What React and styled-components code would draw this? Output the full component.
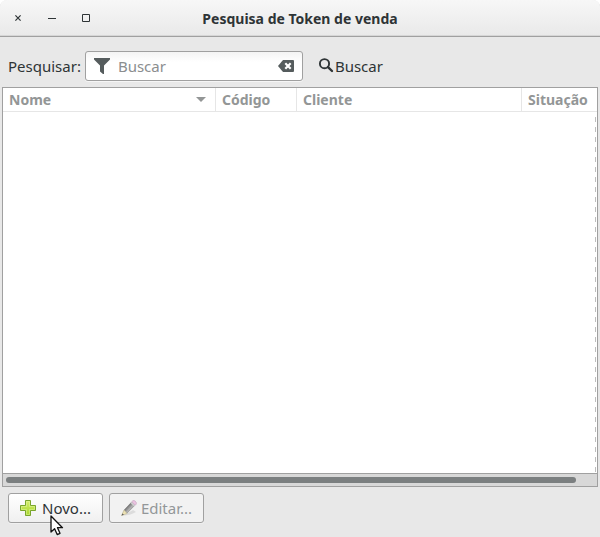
import React from 'react'
import styled, { createGlobalStyle } from 'styled-components'

const columns = [
  { label: 'Nome', width: '213px', sorted: true },
  { label: 'Código', width: '81px' },
  { label: 'Cliente' },
  { label: 'Situação', width: '75px' },
]

const CloseIcon = () => (
  <svg width="10" height="10" viewBox="0 0 10 10">
    <path d="M2.4 2.4 L7.6 7.6 M7.6 2.4 L2.4 7.6" stroke="#2e3436" strokeWidth="1.2" />
  </svg>
)

const MinimizeIcon = () => (
  <svg width="10" height="10" viewBox="0 0 10 10">
    <path d="M1 5.5 H9" stroke="#2e3436" />
  </svg>
)

const MaximizeIcon = () => (
  <svg width="10" height="10" viewBox="0 0 10 10">
    <path d="M1.5 1.5 H8.5 V8.5 H1.5 Z" stroke="#2e3436" fill="none" />
  </svg>
)

const FunnelIcon = () => (
  <svg width="16" height="16" viewBox="0 0 16 16">
    <path d="M0 0 H16 V1.5 L10 7.5 V16 H9 L6 13.5 V7.5 L0 1.5 Z" fill="#555c5d" />
  </svg>
)

const ClearIcon = () => (
  <svg width="16" height="12" viewBox="0 0 16 12">
    <path d="M5 0 H15 Q16 0 16 1 V11 Q16 12 15 12 H5 L0 6 Z" fill="#555c5d" />
    <path d="M7.3 3.3 L12.7 8.7 M12.7 3.3 L7.3 8.7" stroke="#fff" strokeWidth="2.2" />
  </svg>
)

const SearchIcon = () => (
  <svg width="16" height="16" viewBox="0 0 16 16">
    <circle cx="6.5" cy="5.7" r="4.6" fill="none" stroke="#2e3436" strokeWidth="1.9" />
    <path d="M10 9.2 L14 13" stroke="#2e3436" strokeWidth="2.4" strokeLinecap="round" />
  </svg>
)

const AddIcon = () => (
  <svg width="16" height="16" viewBox="0 0 16 16">
    <defs>
      <linearGradient id="add" x1="0" y1="0" x2="0" y2="1">
        <stop offset="0" stopColor="#d3ee6c" />
        <stop offset="1" stopColor="#a8d62c" />
      </linearGradient>
    </defs>
    <path
      d="M5.5 0.5 H10.5 V5.5 H15.5 V10.5 H10.5 V15.5 H5.5 V10.5 H0.5 V5.5 H5.5 Z"
      fill="url(#add)"
      stroke="#79a52d"
      strokeLinejoin="round"
    />
    <path
      d="M6.5 1.5 H9.5 V6.5 H14.5 V9.5 H9.5 V14.5 H6.5 V9.5 H1.5 V6.5 H6.5 Z"
      fill="none"
      stroke="#e6f6a5"
      strokeOpacity="0.5"
    />
  </svg>
)

const PencilIcon = () => (
  <svg width="16" height="16" viewBox="0 0 16 16">
    <path d="M2 15.5 Q9 15.5 15 12 L12 10 L5 14 Z" fill="#dcdcdc" />
    <path d="M3 10 L10.5 2 L14 5.5 L6 13.5 Z" fill="#9a9a9a" />
    <path d="M3 10 L10.5 2 L11.5 3 L4 11 Z" fill="#7f7f7f" />
    <path d="M5 12 L12 4.5 L13 5.3 L5.6 13 Z" fill="#b5b5b5" />
    <path d="M3 10 L6 13.5 L0.6 15.6 Z" fill="#eee3b4" stroke="#b9b08d" strokeWidth="0.6" />
    <path d="M1.6 13.4 L2.9 14.7 L0.5 15.6 Z" fill="#555" />
    <path d="M9.5 3 L10.8 1.7 L14.3 5.2 L13 6.5 Z" fill="#cfcfcf" />
    <path
      d="M10.8 1.7 L11.9 0.7 Q13 0 14.4 1.3 Q16 2.9 15.2 4.1 L14.3 5.2 Z"
      fill="#ecc5e2"
      stroke="#c59dbd"
      strokeWidth="0.6"
    />
  </svg>
)

const PointerIcon = () => (
  <svg width="14" height="21" viewBox="0 0 14 21">
    <path
      d="M1 1 V17 L4.6 13.7 L7.2 19.6 L10 18.3 L7.5 12.7 H12.5 Z"
      fill="#fff"
      stroke="#111"
      strokeWidth="1.3"
      strokeLinejoin="round"
    />
  </svg>
)

const App = () => (
  <Window>
    <GlobalStyle />
    <TitleBar>
      <WindowButton aria-label="Fechar">
        <CloseIcon />
      </WindowButton>
      <WindowButton aria-label="Minimizar">
        <MinimizeIcon />
      </WindowButton>
      <WindowButton aria-label="Maximizar">
        <MaximizeIcon />
      </WindowButton>
      <Title>Pesquisa de Token de venda</Title>
    </TitleBar>
    <SearchBar>
      <label htmlFor="search">Pesquisar:</label>
      <SearchBox>
        <FunnelIcon />
        <SearchInput id="search" placeholder="Buscar" />
        <IconButton aria-label="Limpar">
          <ClearIcon />
        </IconButton>
      </SearchBox>
      <FlatButton>
        <SearchIcon />
        Buscar
      </FlatButton>
    </SearchBar>
    <ListFrame>
      <ListArea>
        <Table>
          <thead>
            <tr>
              {columns.map(({ label, width, sorted }) => (
                <HeaderCell key={label} $width={width}>
                  <HeaderContent>
                    {label}
                    {sorted && <SortArrow />}
                  </HeaderContent>
                </HeaderCell>
              ))}
            </tr>
          </thead>
        </Table>
        <Overflow />
      </ListArea>
      <ScrollTrack>
        <ScrollThumb />
      </ScrollTrack>
    </ListFrame>
    <Actions>
      <ActionButton>
        <AddIcon />
        Novo...
        <Pointer>
          <PointerIcon />
        </Pointer>
      </ActionButton>
      <ActionButton disabled>
        <PencilIcon />
        Editar...
      </ActionButton>
    </Actions>
  </Window>
)

const GlobalStyle = createGlobalStyle`
  * {
    box-sizing: border-box;
  }

  body {
    margin: 0;
    background: #fff;
  }

  body, button, input {
    font-family: 'Noto Sans', 'Open Sans', sans-serif;
    font-size: 15px;
    line-height: 20px;
    color: #2e3436;
  }

  button {
    margin: 0;
    padding: 0;
    border: 0;
    background: none;
  }

  svg {
    display: block;
    flex: none;
  }
`

const Window = styled.main`
  display: flex;
  flex-direction: column;
  min-height: 100vh;
  border-radius: 7px 7px 0 0;
  background: #e8e8e8;
`

const TitleBar = styled.header`
  display: flex;
  align-items: center;
  gap: 24px;
  height: 37px;
  padding: 0 115px 0 13px;
  border-bottom: 1px solid #a0a0a0;
  border-radius: 7px 7px 0 0;
  background: linear-gradient(#f7f7f7, #e9e9e9);
  box-shadow: inset 0 -1px #d6d6d6;
`

const WindowButton = styled.button`
  flex: none;
`

const Title = styled.h1`
  flex: 1;
  margin: 0;
  padding-top: 2px;
  font-size: 14px;
  line-height: 20px;
  text-align: center;
`

const SearchBar = styled.div`
  display: flex;
  align-items: center;
  padding: 14px 8px 6px;
`

const SearchBox = styled.div`
  display: flex;
  align-items: center;
  width: 218px;
  height: 30px;
  margin-left: 4px;
  padding: 0 8px;
  border: 1px solid #a0a0a0;
  border-radius: 3px;
  background: linear-gradient(#f4f4f4, #fff 10px);
  box-shadow: 0 1px #f5f5f5;
`

const SearchInput = styled.input`
  flex: 1;
  min-width: 0;
  padding: 0 8px;
  border: 0;
  outline: 0;
  background: none;

  &::placeholder {
    color: #8b8e8f;
    opacity: 1;
  }
`

const IconButton = styled.button`
  flex: none;
`

const FlatButton = styled.button`
  display: flex;
  align-items: center;
  gap: 1px;
  margin-left: 15px;
`

const ListFrame = styled.section`
  display: flex;
  flex: 1;
  flex-direction: column;
  margin: 0 2px;
  border: 1px solid #a0a0a0;
  background: #fff;
`

const ListArea = styled.div`
  display: flex;
  flex: 1;
  flex-direction: column;
`

const Table = styled.table`
  width: 100%;
  table-layout: fixed;
  border-spacing: 0;
`

const HeaderCell = styled.th`
  width: ${props => props.$width || 'auto'};
  height: 24px;
  padding: 0 6px;
  border-right: 1px solid #e6e6e6;
  border-bottom: 1px solid #e6e6e6;
  color: #939696;
  font-size: 14px;
  text-align: left;

  &:last-child {
    border-right: 0;
  }
`

const HeaderContent = styled.div`
  display: flex;
  align-items: center;
  justify-content: space-between;
`

const SortArrow = styled.span`
  margin-right: 3px;
  border: 5px solid transparent;
  border-top-color: #939696;
  border-bottom: 0;
`

const Overflow = styled.div`
  flex: 1;
  width: 1px;
  margin-right: 1px;
  align-self: flex-end;
  background: repeating-linear-gradient(transparent 0 5px, #bdbdbd 5px 10px);
`

const ScrollTrack = styled.div`
  height: 13px;
  padding: 3px;
  border-top: 1px solid #a0a0a0;
  background: #d8d8d8;
`

const ScrollThumb = styled.div`
  width: 97%;
  height: 6px;
  border-radius: 3px;
  background: #7b7f80;
`

const Actions = styled.footer`
  display: flex;
  gap: 6px;
  padding: 6px 8px 14px;
`

const ActionButton = styled.button`
  position: relative;
  display: flex;
  align-items: center;
  justify-content: center;
  gap: 6px;
  width: 95px;
  height: 30px;
  border: 1px solid #a0a0a0;
  border-radius: 3px;
  background: linear-gradient(#fff, #f0f0f0);
  box-shadow: 0 1px #f0f0f0;

  &:disabled {
    gap: 4px;
    background: #f2f2f2;
    color: #939799;
  }
`

const Pointer = styled.span`
  position: absolute;
  top: 21px;
  left: 41px;
  pointer-events: none;
`

export default App
